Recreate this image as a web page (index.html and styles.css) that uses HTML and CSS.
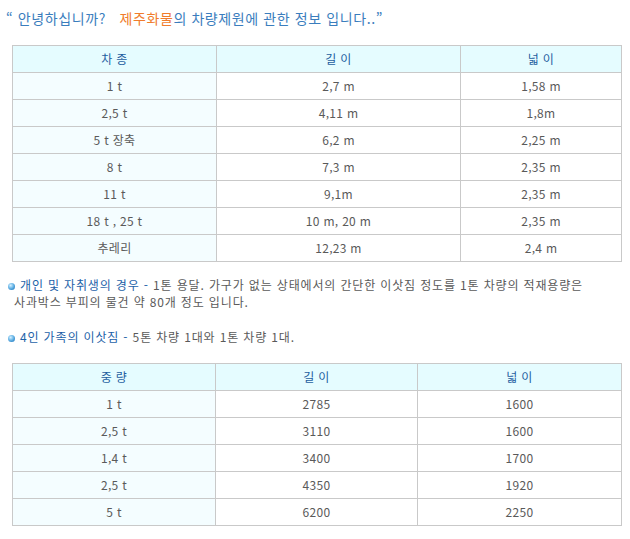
FILE: index.html
```html
<!DOCTYPE html>
<html lang="ko">
<head>
<meta charset="utf-8">
<link rel="stylesheet" href="styles.css">
</head>
<body>
<div class="page">
  <h1 class="title">“ 안녕하십니까? &nbsp;&nbsp;<span class="brand">제주화물</span>의 차량제원에 관한 정보 입니다..”</h1>

  <table class="spec spec-a">
    <colgroup><col class="a1"><col class="a2"><col class="a3"></colgroup>
    <thead>
      <tr><th>차 종</th><th>길 이</th><th>넓 이</th></tr>
    </thead>
    <tbody>
      <tr><td>1 t</td><td>2,7 m</td><td>1,58 m</td></tr>
      <tr><td>2,5 t</td><td>4,11 m</td><td>1,8m</td></tr>
      <tr><td>5 t 장축</td><td>6,2 m</td><td>2,25 m</td></tr>
      <tr><td>8 t</td><td>7,3 m</td><td>2,35 m</td></tr>
      <tr><td>11 t</td><td>9,1m</td><td>2,35 m</td></tr>
      <tr><td>18 t , 25 t</td><td>10 m, 20 m</td><td>2,35 m</td></tr>
      <tr><td>추레리</td><td>12,23 m</td><td>2,4 m</td></tr>
    </tbody>
  </table>

  <div class="note note-one">
    <div class="line"><svg class="dot" width="7" height="7" viewBox="0 0 7 7"><defs><radialGradient id="g1" cx="0.38" cy="0.35" r="0.7"><stop offset="0" stop-color="#d6f0ff"/><stop offset="0.55" stop-color="#6db8e8"/><stop offset="1" stop-color="#2f86c8"/></radialGradient></defs><circle cx="3.5" cy="3.5" r="3.5" fill="url(#g1)"/></svg><span class="label">개인 및 자취생의 경우 -</span> 1톤 용달. 가구가 없는 상태에서의 간단한 이삿짐 정도를 1톤 차량의 적재용량은</div>
    <div class="line cont">사과박스 부피의 물건 약 80개 정도 입니다.</div>
  </div>

  <div class="note note-two">
    <div class="line"><svg class="dot" width="7" height="7" viewBox="0 0 7 7"><defs><radialGradient id="g2" cx="0.38" cy="0.35" r="0.7"><stop offset="0" stop-color="#d6f0ff"/><stop offset="0.55" stop-color="#6db8e8"/><stop offset="1" stop-color="#2f86c8"/></radialGradient></defs><circle cx="3.5" cy="3.5" r="3.5" fill="url(#g2)"/></svg><span class="label">4인 가족의 이삿짐 -</span> 5톤 차량 1대와 1톤 차량 1대.</div>
  </div>

  <table class="spec spec-b">
    <colgroup><col class="b1"><col class="b2"><col class="b3"></colgroup>
    <thead>
      <tr><th>중 량</th><th>길 이</th><th>넓 이</th></tr>
    </thead>
    <tbody>
      <tr><td>1 t</td><td>2785</td><td>1600</td></tr>
      <tr><td>2,5 t</td><td>3110</td><td>1600</td></tr>
      <tr><td>1,4 t</td><td>3400</td><td>1700</td></tr>
      <tr><td>2,5 t</td><td>4350</td><td>1920</td></tr>
      <tr><td>5 t</td><td>6200</td><td>2250</td></tr>
    </tbody>
  </table>
</div>
</body>
</html>
```

FILE: styles.css
```css
html, body {
  margin: 0;
  padding: 0;
  background: #ffffff;
}

.page {
  padding: 9px 0 0 0;
  font-family: "Noto Sans CJK KR", "Noto Sans", sans-serif;
  font-size: 12px;
  color: #5a5a5a;
}

.title {
  margin: 0 0 0 6px;
  font-size: 14px;
  font-weight: normal;
  line-height: 18px;
  letter-spacing: 0.6px;
  color: #3a7dbd;
  white-space: nowrap;
}

.brand {
  color: #f07c2c;
}

.spec {
  margin-left: 12px;
  border-collapse: collapse;
  table-layout: fixed;
  width: 609px;
}

.spec-a {
  margin-top: 18px;
}

.spec th,
.spec td {
  border: 1px solid #c9c9c9;
  height: 26px;
  padding: 0;
  text-align: center;
  vertical-align: middle;
  font-size: 12px;
  line-height: 14px;
  font-weight: normal;
  letter-spacing: 0.3px;
}

.spec th {
  background: #e5fcff;
  color: #1f5f9f;
}

.spec td {
  background: #ffffff;
  color: #5a5a5a;
}

.spec td:first-child {
  background: #f4fdff;
}

.a1 { width: 204px; }
.a2 { width: 244px; }
.a3 { width: 161px; }

.b1 { width: 203px; }
.b2 { width: 202px; }
.b3 { width: 204px; }

.note {
  margin-left: 8px;
  line-height: 17px;
  letter-spacing: 0.85px;
  white-space: nowrap;
}

.note-one {
  margin-top: 14px;
}

.note-two {
  margin-top: 18px;
}

.dot {
  display: inline-block;
  vertical-align: 0px;
  margin-right: 5px;
}

.label {
  color: #1d62a8;
}

.cont {
  padding-left: 6px;
}

.spec-b {
  margin-top: 18px;
}
```
